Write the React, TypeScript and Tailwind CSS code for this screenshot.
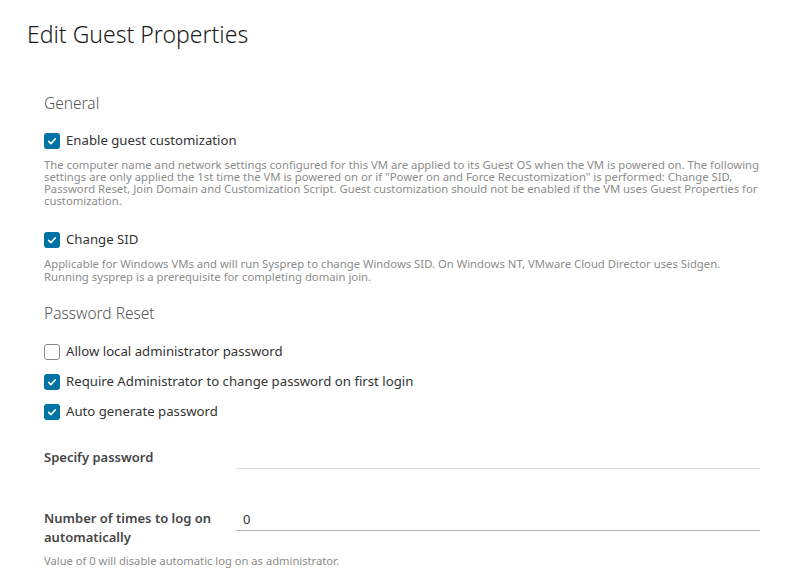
import type { ReactNode } from "react";

function Check({ on }: { on: boolean }) {
  return on ? (
    <span className="grid h-4 w-4 shrink-0 place-items-center rounded-[3px] bg-[#0072a3]">
      <svg viewBox="0 0 16 16" className="h-3 w-3" fill="none" stroke="white" strokeWidth="2.2" strokeLinecap="round" strokeLinejoin="round">
        <path d="M3.5 8.5l3 3 6-6.5" />
      </svg>
    </span>
  ) : (
    <span className="h-4 w-4 shrink-0 rounded-[3px] border border-[#8c8c8c] bg-white" />
  );
}

function Row({ on, children, className = "" }: { on: boolean; children: ReactNode; className?: string }) {
  return (
    <label className={`flex h-5 items-center gap-[6px] text-[13.2px] text-[#333] ${className}`}>
      <Check on={on} />
      <span>{children}</span>
    </label>
  );
}

export default function App() {
  return (
    <div className="h-[576px] w-[805px] overflow-hidden bg-white font-['Noto_Sans',sans-serif]">
      <h1 className="pl-[27px] pt-[20px] text-[23px] font-light leading-[28px] text-[#1b1b1b]">Edit Guest Properties</h1>

      <div className="flex flex-col pl-[44px] pr-[45px]">
        <h2 className="mt-[45px] text-[15.5px] font-light leading-5 text-[#565656]">General</h2>

        <Row on className="mt-[18px]">Enable guest customization</Row>
        <p className="mt-[8px] whitespace-nowrap text-[11.3px] leading-[12px] text-[#8c8c8c]">
          The computer name and network settings configured for this VM are applied to its Guest OS when the VM is powered on. The following
          <br />
          settings are only applied the 1st time the VM is powered on or if "Power on and Force Recustomization" is performed: Change SID,
          <br />
          Password Reset, Join Domain and Customization Script. Guest customization should not be enabled if the VM uses Guest Properties for
          <br />
          customization.
        </p>

        <Row on className="mt-[23px]">Change SID</Row>
        <p className="mt-[8px] whitespace-nowrap text-[11.3px] leading-[12.5px] text-[#8c8c8c]">
          Applicable for Windows VMs and will run Sysprep to change Windows SID. On Windows NT, VMware Cloud Director uses Sidgen.
          <br />
          Running sysprep is a prerequisite for completing domain join.
        </p>

        <h2 className="mt-[20px] text-[15.5px] font-light leading-5 text-[#565656]">Password Reset</h2>

        <Row on={false} className="mt-[19px]">Allow local administrator password</Row>
        <Row on className="mt-[10px]">Require Administrator to change password on first login</Row>
        <Row on className="mt-[10px]">Auto generate password</Row>

        <div className="mt-[25px] flex items-start">
          <span className="w-[192px] shrink-0 text-[13px] font-semibold leading-5 text-[#454545]">Specify password</span>
          <div className="h-[22px] flex-1 border-b border-[#dcdcdc]" />
        </div>

        <div className="mt-[40px] flex items-start">
          <span className="w-[192px] shrink-0 text-[13px] font-semibold leading-[19px] text-[#454545]">
            Number of times to log on
            <br />
            automatically
          </span>
          <div className="flex h-[22px] flex-1 items-center border-b border-[#b3b3b3] pl-[7px] text-[13px] text-[#333]">0</div>
        </div>

        <p className="mt-[6px] text-[11.2px] leading-4 text-[#8c8c8c]">Value of 0 will disable automatic log on as administrator.</p>
      </div>
    </div>
  );
}
